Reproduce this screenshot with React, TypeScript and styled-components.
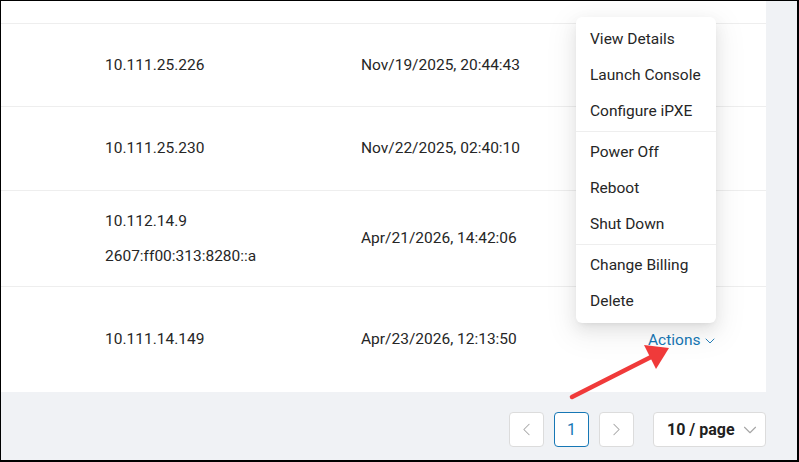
import React, { FC } from 'react';
import styled, { createGlobalStyle } from 'styled-components';
import { ChevronDown, ChevronLeft, ChevronRight } from 'lucide-react';

const GlobalStyle = createGlobalStyle`
  html, body {
    margin: 0;
    padding: 0;
    background: #ffffff;
  }
  body {
    font-family: Roboto, 'Liberation Sans', sans-serif;
  }
`;

const LINK = '#1677b5';

const StyledFrame = styled.div`
  position: relative;
  box-sizing: border-box;
  width: 799px;
  height: 462px;
  border-style: solid;
  border-color: #000000;
  border-width: 1px 2px 2px 1px;
  background-color: #f0f2f5;
  padding-right: 31px;
  overflow: hidden;
`;

const StyledPanel = styled.div`
  background-color: #ffffff;
  height: 391px;
  display: flex;
  flex-direction: column;
`;

const StyledRow = styled.div<{ $height: number; $last?: boolean }>`
  display: grid;
  grid-template-columns: 360px 287px 1fr;
  align-items: center;
  box-sizing: border-box;
  height: ${(p) => p.$height}px;
  border-bottom: ${(p) => (p.$last ? 'none' : '1px solid #eeeeee')};
  font-size: 15.5px;
  color: #262626;
`;

const StyledIpCell = styled.div`
  padding-left: 104px;
  display: flex;
  flex-direction: column;
  gap: 16px;
  line-height: 19px;
`;

const StyledCell = styled.div`
  line-height: 19px;
`;

const StyledActions = styled.span`
  display: inline-flex;
  align-items: center;
  gap: 2px;
  color: ${LINK};
  line-height: 19px;
  padding-top: 2px;
`;

const StyledMenu = styled.ul`
  position: absolute;
  left: 575px;
  top: 16px;
  width: 140px;
  margin: 0;
  padding: 4px 0;
  list-style: none;
  background-color: #ffffff;
  border-radius: 6px;
  box-shadow: 0 6px 16px 0 rgba(0, 0, 0, 0.08), 0 3px 6px -4px rgba(0, 0, 0, 0.12),
    0 9px 28px 8px rgba(0, 0, 0, 0.05);
`;

const StyledMenuItem = styled.li`
  height: 36px;
  display: flex;
  align-items: center;
  padding: 0 14px;
  font-size: 15.5px;
  color: #262626;
  white-space: nowrap;
`;

const StyledDivider = styled.li`
  height: 1px;
  margin: 2px 0;
  background-color: #eeeeee;
`;

const StyledFooter = styled.div`
  display: flex;
  justify-content: flex-end;
  align-items: center;
  gap: 10px;
  margin-top: 20px;
`;

const StyledPageButton = styled.div<{ $active?: boolean }>`
  box-sizing: border-box;
  width: 35px;
  height: 35px;
  display: flex;
  align-items: center;
  justify-content: center;
  background-color: #ffffff;
  border: 1px solid ${(p) => (p.$active ? LINK : '#dcdcdc')};
  border-radius: 4px;
  color: ${(p) => (p.$active ? LINK : '#a6a6a6')};
  font-size: 16px;
`;

const StyledSizeSelect = styled.div`
  box-sizing: border-box;
  width: 113px;
  height: 35px;
  margin-left: 9px;
  display: flex;
  align-items: center;
  justify-content: space-between;
  padding: 0 4px 0 13px;
  background-color: #ffffff;
  border: 1px solid #dcdcdc;
  border-radius: 4px;
  font-size: 16px;
  font-weight: 700;
  color: #1f1f1f;
`;

const StyledArrow = styled.svg`
  position: absolute;
  left: 560px;
  top: 315px;
  pointer-events: none;
`;

interface Machine {
  ips: string[];
  created: string;
  height: number;
}

const machines: Machine[] = [
  { ips: ['10.111.25.226'], created: 'Nov/19/2025, 20:44:43', height: 83 },
  { ips: ['10.111.25.230'], created: 'Nov/22/2025, 02:40:10', height: 84 },
  { ips: ['10.112.14.9', '2607:ff00:313:8280::a'], created: 'Apr/21/2026, 14:42:06', height: 96 },
  { ips: ['10.111.14.149'], created: 'Apr/23/2026, 12:13:50', height: 105 },
];

const menuGroups = [
  ['View Details', 'Launch Console', 'Configure iPXE'],
  ['Power Off', 'Reboot', 'Shut Down'],
  ['Change Billing', 'Delete'],
];

const App: FC = () => {
  const openRow = machines.length - 1;

  return (
    <StyledFrame>
      <GlobalStyle />
      <StyledPanel>
        <StyledRow $height={23} />
        {machines.map((m, index) => (
          <StyledRow key={index} $height={m.height} $last={index === machines.length - 1}>
            <StyledIpCell>
              {m.ips.map((ip) => (
                <span key={ip}>{ip}</span>
              ))}
            </StyledIpCell>
            <StyledCell>{m.created}</StyledCell>
            <StyledCell>
              {/* the open dropdown covers the other rows' links */}
              {index === openRow && (
                <StyledActions>
                  Actions
                  <ChevronDown size={16} strokeWidth={1.4} />
                </StyledActions>
              )}
            </StyledCell>
          </StyledRow>
        ))}
      </StyledPanel>

      <StyledFooter>
        <StyledPageButton>
          <ChevronLeft size={21} strokeWidth={1.2} />
        </StyledPageButton>
        <StyledPageButton $active>1</StyledPageButton>
        <StyledPageButton>
          <ChevronRight size={21} strokeWidth={1.2} />
        </StyledPageButton>
        <StyledSizeSelect>
          10 / page
          <ChevronDown size={22} strokeWidth={1.2} color="#a6a6a6" />
        </StyledSizeSelect>
      </StyledFooter>

      <StyledMenu>
        {menuGroups.map((group, gi) => (
          <React.Fragment key={gi}>
            {gi > 0 && <StyledDivider />}
            {group.map((label) => (
              <StyledMenuItem key={label}>{label}</StyledMenuItem>
            ))}
          </React.Fragment>
        ))}
      </StyledMenu>

      {/* red annotation arrow pointing at the Actions link */}
      <StyledArrow width="120" height="90" viewBox="0 0 120 90">
        <line x1="11" y1="81" x2="92" y2="40" stroke="#f03a3a" strokeWidth="4.5" strokeLinecap="round" />
        <polygon points="108,32 83,29 95,53" fill="#f03a3a" />
      </StyledArrow>
    </StyledFrame>
  );
};

export default App;
